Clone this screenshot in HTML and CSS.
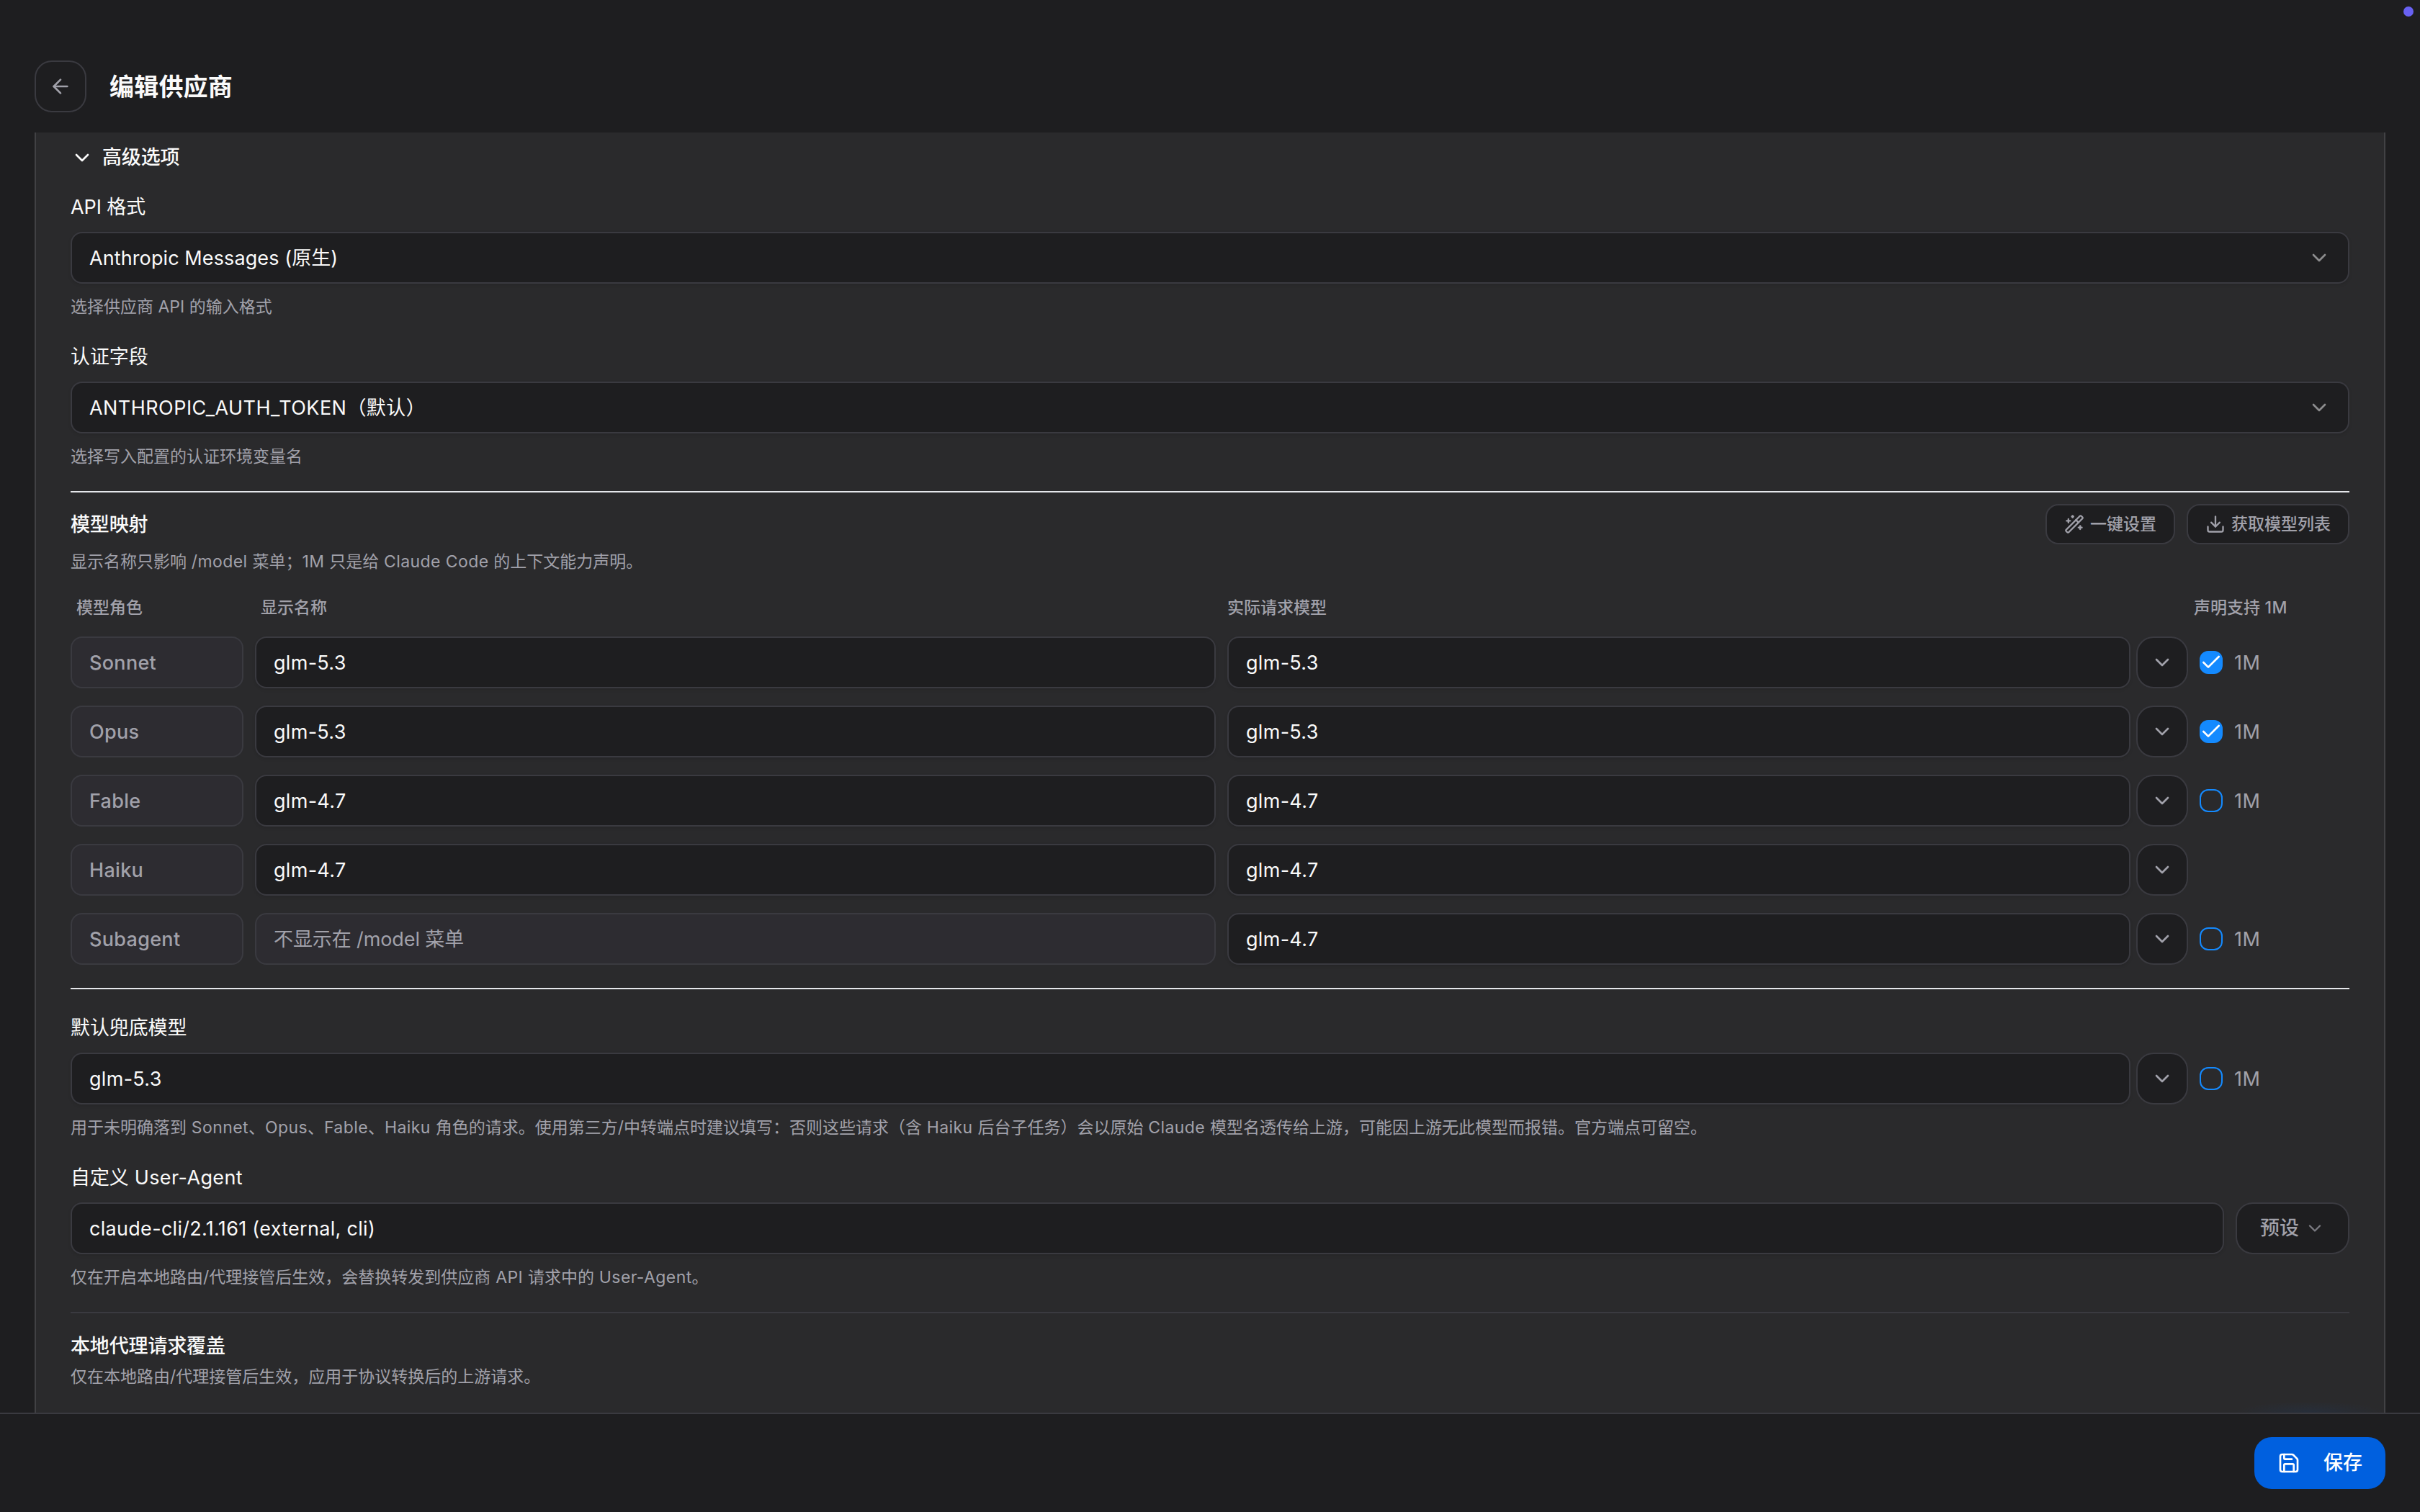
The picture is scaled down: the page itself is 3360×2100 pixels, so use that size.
FILE: index.html
```html
<!DOCTYPE html>
<html lang="zh-CN">
<head>
<meta charset="utf-8">
<title>编辑供应商</title>
<link rel="stylesheet" href="styles.css">
</head>
<body>
<svg class="sprite" aria-hidden="true">
  <symbol id="chevron" viewBox="0 0 24 24"><path d="m6 9 6 6 6-6"/></symbol>
  <symbol id="arrow-left" viewBox="0 0 24 24"><path d="m12 19-7-7 7-7"/><path d="M19 12H5"/></symbol>
  <symbol id="check" viewBox="0 0 24 24"><path d="M20 6 9 17l-5-5"/></symbol>
  <symbol id="wand" viewBox="0 0 24 24"><path d="m21.64 3.64-1.28-1.28a1.21 1.21 0 0 0-1.72 0L2.36 18.64a1.21 1.21 0 0 0 0 1.72l1.28 1.28a1.2 1.2 0 0 0 1.72 0L21.64 5.36a1.2 1.2 0 0 0 0-1.72"/><path d="m14 7 3 3"/><path d="M5 6v4"/><path d="M19 14v4"/><path d="M10 2v2"/><path d="M7 8H3"/><path d="M21 16h-4"/><path d="M11 3H9"/></symbol>
  <symbol id="download" viewBox="0 0 24 24"><path d="M21 15v4a2 2 0 0 1-2 2H5a2 2 0 0 1-2-2v-4"/><path d="m7 10 5 5 5-5"/><path d="M12 15V3"/></symbol>
  <symbol id="save" viewBox="0 0 24 24"><path d="M15.2 3a2 2 0 0 1 1.4.6l3.8 3.8a2 2 0 0 1 .6 1.4V19a2 2 0 0 1-2 2H5a2 2 0 0 1-2-2V5a2 2 0 0 1 2-2z"/><path d="M17 21v-7a1 1 0 0 0-1-1H8a1 1 0 0 0-1 1v7"/><path d="M7 3v4a1 1 0 0 0 1 1h7"/></symbol>
</svg>
<div class="app">
  <span class="status-dot"></span>
  <header class="topbar">
    <button class="btn icon-btn"><svg class="icon"><use href="#arrow-left"/></svg></button>
    <h1 class="title">编辑供应商</h1>
  </header>

  <main class="panel">
    <div class="advanced"><svg class="icon"><use href="#chevron"/></svg><span>高级选项</span></div>

    <section class="field">
      <label class="label">API 格式</label>
      <div class="input select"><span class="format">Anthropic Messages (原生)</span><svg class="icon dim"><use href="#chevron"/></svg></div>
      <p class="hint">选择供应商 API 的输入格式</p>
    </section>

    <section class="field">
      <label class="label">认证字段</label>
      <div class="input select"><span class="token">ANTHROPIC_AUTH_TOKEN（默认）</span><svg class="icon dim"><use href="#chevron"/></svg></div>
      <p class="hint">选择写入配置的认证环境变量名</p>
    </section>

    <section class="mapping">
      <div class="mapping-head">
        <h2 class="label heading">模型映射</h2>
        <div class="actions">
          <button class="btn small"><svg class="icon sm"><use href="#wand"/></svg>一键设置</button>
          <button class="btn small"><svg class="icon sm"><use href="#download"/></svg>获取模型列表</button>
        </div>
      </div>
      <p class="hint">显示名称只影响<span class="en"> /model </span>菜单；<span class="en">1M </span>只是给<span class="en"> Claude Code </span>的上下文能力声明。</p>
      <div class="grid-head"><span class="inset">模型角色</span><span class="inset">显示名称</span><span>实际请求模型</span><span>声明支持<span class="en"> 1M</span></span></div>
      <div class="rows">
        <div class="row">
          <div class="input role">Sonnet</div><div class="input">glm-5.3</div>
          <div class="combo"><div class="input">glm-5.3</div><button class="btn icon-btn"><svg class="icon"><use href="#chevron"/></svg></button></div>
          <div class="claim"><span class="box on"><svg class="tick"><use href="#check"/></svg></span><span class="en">1M</span></div>
        </div>
        <div class="row">
          <div class="input role">Opus</div><div class="input">glm-5.3</div>
          <div class="combo"><div class="input">glm-5.3</div><button class="btn icon-btn"><svg class="icon"><use href="#chevron"/></svg></button></div>
          <div class="claim"><span class="box on"><svg class="tick"><use href="#check"/></svg></span><span class="en">1M</span></div>
        </div>
        <div class="row">
          <div class="input role">Fable</div><div class="input">glm-4.7</div>
          <div class="combo"><div class="input">glm-4.7</div><button class="btn icon-btn"><svg class="icon"><use href="#chevron"/></svg></button></div>
          <div class="claim"><span class="box"></span><span class="en">1M</span></div>
        </div>
        <div class="row">
          <div class="input role">Haiku</div><div class="input">glm-4.7</div>
          <div class="combo"><div class="input">glm-4.7</div><button class="btn icon-btn"><svg class="icon"><use href="#chevron"/></svg></button></div>
        </div>
        <div class="row">
          <div class="input role">Subagent</div><div class="input muted">不显示在 /model 菜单</div>
          <div class="combo"><div class="input">glm-4.7</div><button class="btn icon-btn"><svg class="icon"><use href="#chevron"/></svg></button></div>
          <div class="claim"><span class="box"></span><span class="en">1M</span></div>
        </div>
      </div>
    </section>

    <section class="fallback">
      <label class="label">默认兜底模型</label>
      <div class="fallback-row">
        <div class="combo"><div class="input">glm-5.3</div><button class="btn icon-btn"><svg class="icon"><use href="#chevron"/></svg></button></div>
        <div class="claim"><span class="box"></span><span class="en">1M</span></div>
      </div>
      <p class="hint">用于未明确落到<span class="en"> Sonnet</span>、<span class="en">Opus</span>、<span class="en">Fable</span>、<span class="en">Haiku </span>角色的请求。使用第三方/中转端点时建议填写：否则这些请求（含<span class="en"> Haiku </span>后台子任务）会以原始<span class="en"> Claude </span>模型名透传给上游，可能因上游无此模型而报错。官方端点可留空。</p>
    </section>

    <section class="field agent">
      <label class="label">自定义<span class="en"> User-Agent</span></label>
      <div class="agent-row">
        <div class="input">claude-cli/2.1.161 (external, cli)</div>
        <button class="btn preset">预设<svg class="icon sm"><use href="#chevron"/></svg></button>
      </div>
      <p class="hint">仅在开启本地路由/代理接管后生效，会替换转发到供应商<span class="en"> API </span>请求中的<span class="en"> User-Agent</span>。</p>
    </section>

    <section class="override">
      <h2 class="label heading">本地代理请求覆盖</h2>
      <p class="hint">仅在本地路由/代理接管后生效，应用于协议转换后的上游请求。</p>
    </section>
  </main>

  <footer class="footer">
    <button class="save"><svg class="icon"><use href="#save"/></svg>保存</button>
  </footer>
</div>
</body>
</html>
```
FILE: styles.css
```css
:root {
  --bg: #1e1e20;
  --panel: #2a2a2c;
  --muted-bg: #2d2c31;
  --border: #3a3a40;
  --text: #fafafa;
  --muted: #a1a1aa;
  --accent: #148aff;
}

* { box-sizing: border-box; margin: 0; }

body {
  background: var(--bg);
  color: var(--text);
  font: 400 27px/36px Inter, "Noto Sans CJK SC", sans-serif;
}

button { font: inherit; }

.sprite { display: none; }

.app {
  position: relative;
  display: flex;
  flex-direction: column;
  width: 3360px;
  height: 2100px;
  overflow: hidden;
}

.status-dot {
  position: absolute;
  top: 9px;
  right: 9px;
  width: 14px;
  height: 14px;
  border-radius: 50%;
  background: #6861f2;
}

.topbar {
  display: flex;
  flex: none;
  align-items: flex-start;
  gap: 32px;
  height: 184px;
  padding: 84px 48px 0;
}

.title { font-size: 34px; line-height: 73px; font-weight: 600; letter-spacing: .2px; }

.en { letter-spacing: .4px; white-space: pre; }

.icon {
  flex: none;
  width: 32px;
  height: 32px;
  fill: none;
  stroke: currentColor;
  stroke-width: 2;
  stroke-linecap: round;
  stroke-linejoin: round;
}
.icon.sm { width: 28px; height: 28px; }
.icon.dim { opacity: .5; }

.btn {
  display: flex;
  flex: none;
  align-items: center;
  justify-content: center;
  gap: 8px;
  padding: 0;
  border: 2px solid var(--border);
  border-radius: 24px;
  background: var(--bg);
  color: var(--muted);
  font-weight: 500;
}
.icon-btn { width: 72px; height: 72px; }
.small { height: 56px; padding: 0 24px; border-radius: 18px; font-size: 23px; }
.preset { width: 158px; height: 72px; }
.preset .icon { opacity: .7; }

.panel {
  flex: none;
  height: 1778px;
  margin: 0 48px;
  padding: 17px 48px 0;
  border: solid #414144;
  border-width: 0 2px;
  background: var(--panel);
  overflow: hidden;
}

.advanced { display: flex; align-items: center; gap: 12px; height: 36px; margin-bottom: 33px; font-weight: 500; letter-spacing: -.15px; }

.field + .field { margin-top: 36px; }

.label { display: block; margin-bottom: 16px; font-size: 27px; line-height: 36px; font-weight: 400; letter-spacing: -.1px; }
.heading { font-weight: 500; letter-spacing: -.15px; }

.input {
  display: flex;
  flex: 1;
  align-items: center;
  height: 72px;
  padding: 2px 24px 0;
  border: 2px solid var(--border);
  border-radius: 16px;
  background: var(--bg);
  box-shadow: 0 2px 4px rgba(0, 0, 0, .1);
  letter-spacing: .3px;
  white-space: pre;
}
.select { justify-content: space-between; }
.select .icon { margin-top: -2px; }
.format { letter-spacing: .1px; }
.token { letter-spacing: .45px; }
.role { padding-top: 1px; background: var(--muted-bg); color: var(--muted); font-weight: 500; box-shadow: none; }
.muted { padding-top: 1px; background: var(--muted-bg); color: var(--muted); box-shadow: none; letter-spacing: -.1px; }

.hint { margin-top: 16px; color: var(--muted); font-size: 23px; line-height: 32px; white-space: nowrap; }

.mapping { margin-top: 32px; padding-top: 16px; border-top: 2px solid #e5e7eb; }
.mapping-head { display: flex; align-items: center; justify-content: space-between; height: 56px; }
.mapping-head .label { margin: 2px 0 0; }
.mapping > .hint { margin-top: 8px; }
.actions { display: flex; gap: 16px; }

.grid-head {
  display: grid;
  grid-template-columns: 240px 1334px 1326px 1fr;
  gap: 16px;
  margin: 32px 0 24px;
  color: var(--muted);
  font-size: 23px;
  line-height: 32px;
  font-weight: 500;
}
.inset { padding-left: 8px; }

.rows { display: grid; gap: 24px; }
.row { display: grid; grid-template-columns: 240px 1fr 1fr 208px; gap: 16px; }
.combo { display: flex; flex: 1; gap: 8px; }
.claim { display: flex; align-items: center; gap: 16px; color: var(--muted); }
.claim .en { padding-top: 1px; letter-spacing: .6px; }

.box {
  display: flex;
  align-items: center;
  justify-content: center;
  width: 32px;
  height: 32px;
  border: 2px solid var(--accent);
  border-radius: 12px;
}
.box.on { background: var(--accent); }
.tick { flex: none; width: 32px; height: 32px; fill: none; stroke: #fff; stroke-width: 2; stroke-linecap: round; stroke-linejoin: round; }

.fallback { margin-top: 32px; padding-top: 36px; border-top: 2px solid #e5e7eb; }
.fallback-row { display: grid; grid-template-columns: 1fr 208px; gap: 16px; }

.field.agent { margin-top: 36px; }
.agent-row { display: flex; gap: 16px; }

.override { margin-top: 32px; padding-top: 28px; border-top: 2px solid var(--border); }
.override .label { margin: 0; }
.override .hint { margin-top: 8px; }

.footer {
  position: relative;
  display: flex;
  flex: none;
  align-items: flex-start;
  justify-content: flex-end;
  height: 138px;
  padding: 32px 48px 0;
  border-top: 2px solid var(--border);
}

/* Faint halo of the save button over the panel's bottom edge */
.footer::before {
  content: "";
  position: absolute;
  right: 48px;
  bottom: 100%;
  width: 210px;
  height: 16px;
  margin-bottom: 2px;
  background: radial-gradient(ellipse at 50% 100%, rgba(0, 96, 223, .08), rgba(0, 96, 223, 0) 70%);
}

.save {
  display: flex;
  align-items: center;
  gap: 32px;
  height: 72px;
  padding: 0 32px;
  border: 0;
  border-radius: 24px;
  background: #0060df;
  color: #fff;
  font-weight: 500;
}
```
